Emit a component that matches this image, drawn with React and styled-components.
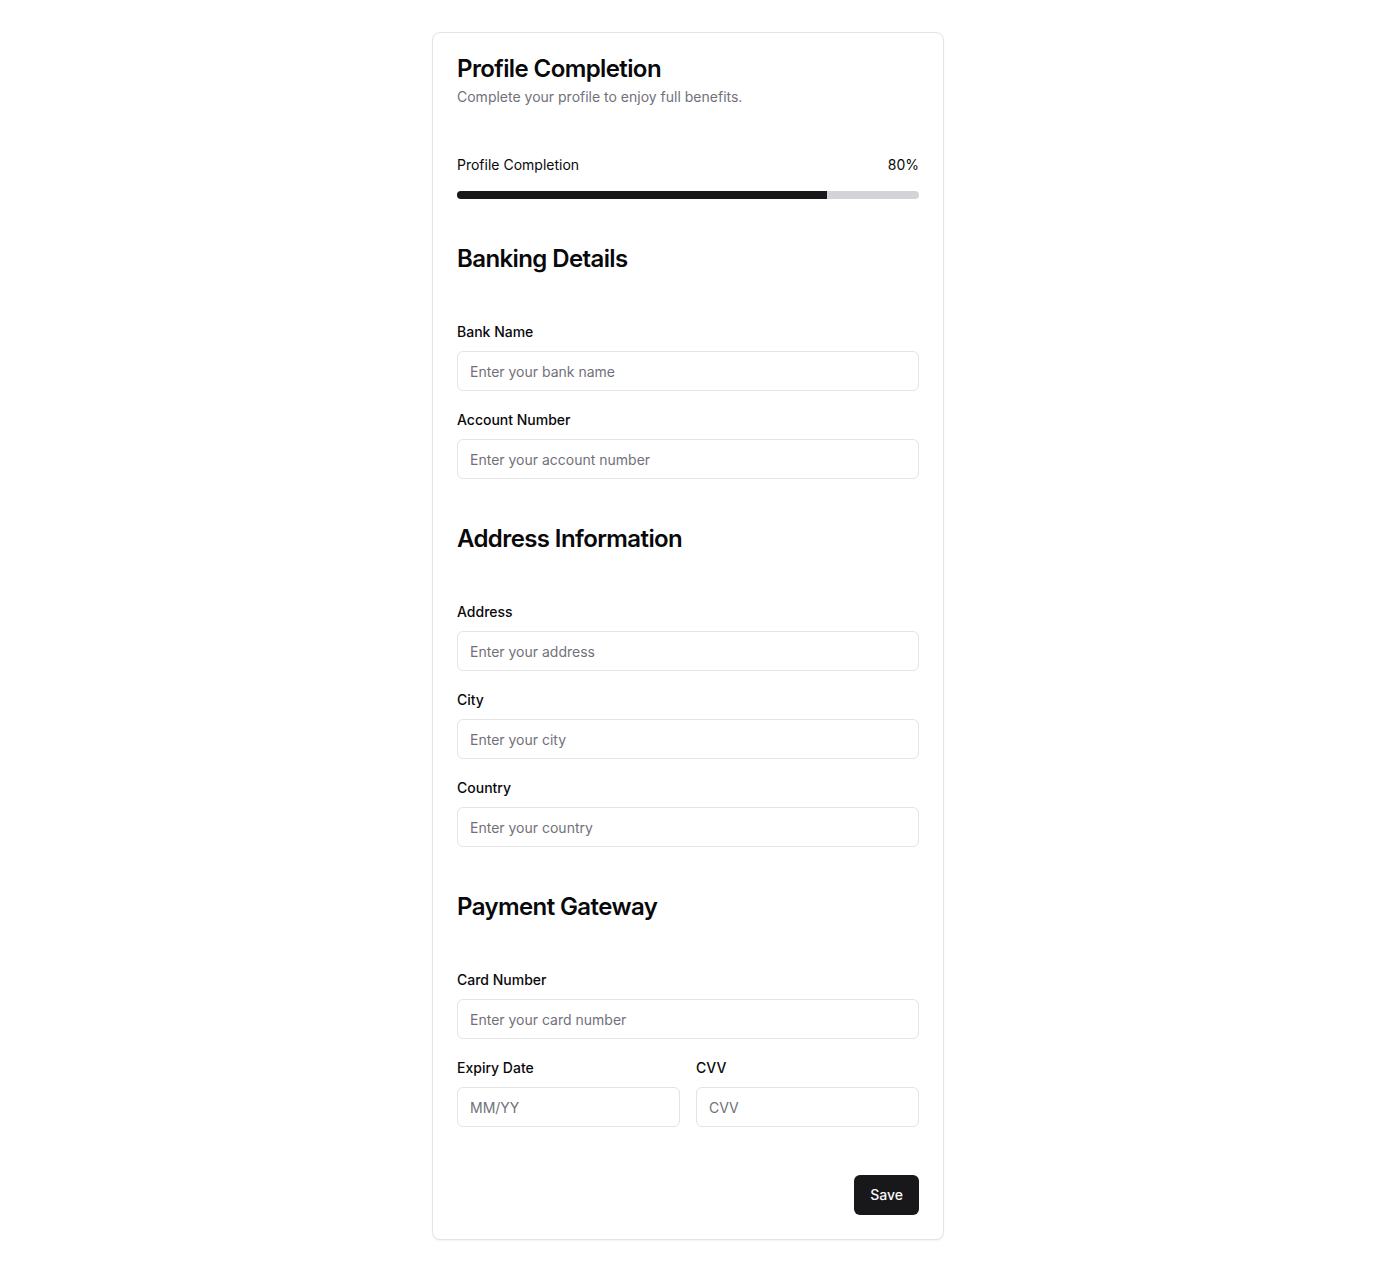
import React from "react";
import styled, { createGlobalStyle } from "styled-components";

const Global = createGlobalStyle`
  html, body { margin: 0; padding: 0; background: #ffffff; }
  body { font-family: Inter, "Noto Sans", "Liberation Sans", sans-serif; color: #09090b; -webkit-font-smoothing: antialiased; }
  * { box-sizing: border-box; }
`;

const Page = styled.div`
  display: flex;
  justify-content: center;
  padding: 32px 0 32px;
`;

const Card = styled.div`
  width: 512px;
  border: 1px solid #e4e4e7;
  border-radius: 8px;
  background: #fff;
  box-shadow: 0 1px 2px rgba(0, 0, 0, 0.05);
  padding: 24px;
  display: flex;
  flex-direction: column;
`;

const Title = styled.h1`
  margin: 0;
  font-size: 24px;
  line-height: 24px;
  font-weight: 600;
  letter-spacing: -0.6px;
`;

const Subtitle = styled.p`
  margin: 6px 0 0;
  font-size: 14px;
  line-height: 20px;
  color: #71717a;
`;

const ProgressHead = styled.div`
  display: flex;
  justify-content: space-between;
  margin-top: 48px;
  font-size: 14px;
  line-height: 20px;
`;

const Track = styled.div`
  margin-top: 16px;
  height: 8px;
  border-radius: 999px;
  background: #d4d4d8;
  overflow: hidden;
`;

const Fill = styled.div`
  height: 100%;
  background: #18181b;
`;

const SectionTitle = styled.h2`
  margin: ${(p) => p.$top}px 0 46px;
  font-size: 24px;
  line-height: 32px;
  font-weight: 600;
  letter-spacing: -0.6px;
`;

const Field = styled.div`
  display: flex;
  flex-direction: column;
  flex: 1;
  & + & { margin-top: 18px; }
`;

const Label = styled.label`
  font-size: 14px;
  line-height: 20px;
  font-weight: 500;
  padding-top: 1px;
  margin-bottom: 9px;
`;

const Input = styled.input`
  height: 40px;
  width: 100%;
  border: 1px solid #e4e4e7;
  border-radius: 6px;
  background: #fff;
  padding: 0 12px;
  font-family: inherit;
  font-size: 14px;
  color: #09090b;
  outline: none;
  &::placeholder { color: #71717a; }
`;

const Row = styled.div`
  display: flex;
  gap: 16px;
  margin-top: 18px;
  & > ${Field} + ${Field} { margin-top: 0; }
`;

const Footer = styled.div`
  display: flex;
  justify-content: flex-end;
  margin-top: 48px;
`;

const Button = styled.button`
  height: 40px;
  padding: 0 16px 2px;
  border: none;
  border-radius: 6px;
  background: #18181b;
  color: #fafafa;
  font-family: inherit;
  font-size: 14px;
  font-weight: 500;
`;

const F = ({ label, placeholder }) => (
  <Field>
    <Label>{label}</Label>
    <Input placeholder={placeholder} />
  </Field>
);

export default function App() {
  const pct = 80;
  return (
    <>
      <Global />
      <Page>
        <Card>
          <Title>Profile Completion</Title>
          <Subtitle>Complete your profile to enjoy full benefits.</Subtitle>
          <ProgressHead>
            <span>Profile Completion</span>
            <span>{pct}%</span>
          </ProgressHead>
          <Track>
            <Fill style={{ width: `${pct}%` }} />
          </Track>

          <SectionTitle $top={44}>Banking Details</SectionTitle>
          <div>
            <F label="Bank Name" placeholder="Enter your bank name" />
            <F label="Account Number" placeholder="Enter your account number" />
          </div>

          <SectionTitle $top={44}>Address Information</SectionTitle>
          <div>
            <F label="Address" placeholder="Enter your address" />
            <F label="City" placeholder="Enter your city" />
            <F label="Country" placeholder="Enter your country" />
          </div>

          <SectionTitle $top={44}>Payment Gateway</SectionTitle>
          <div>
            <F label="Card Number" placeholder="Enter your card number" />
            <Row>
              <F label="Expiry Date" placeholder="MM/YY" />
              <F label="CVV" placeholder="CVV" />
            </Row>
          </div>

          <Footer>
            <Button>Save</Button>
          </Footer>
        </Card>
      </Page>
    </>
  );
}
